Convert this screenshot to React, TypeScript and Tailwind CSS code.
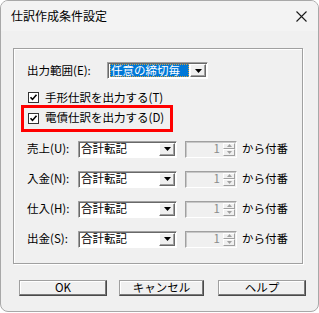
import React from "react";

const FONT = { fontFamily: '"Noto Sans CJK JP", "Noto Sans", sans-serif' };

function DropButton() {
  return (
    <div className="w-[16px] h-full flex items-center justify-center bg-[#f0f0f0] border border-t-white border-l-white border-b-[#696969] border-r-[#696969] shadow-[inset_-1px_-1px_0_#a0a0a0]">
      <svg width="7" height="4" viewBox="0 0 7 4">
        <path d="M0 0h7L3.5 4z" fill="#000" />
      </svg>
    </div>
  );
}

function Combo({ value, width, selected }: { value: string; width: number; selected?: boolean }) {
  return (
    <div
      className="h-[17px] flex items-stretch bg-white border border-t-[#a0a0a0] border-l-[#a0a0a0] border-b-white border-r-white shadow-[inset_1px_1px_0_#696969]"
      style={{ width }}
    >
      <div className="flex-1 flex items-center pl-[2px] pr-[1px] py-[1px] min-w-0">
        {selected ? (
          <div className="w-full h-full bg-[#0078d7] text-white flex items-center pl-[1px] outline-1 outline-dotted outline-[#d0a040] -outline-offset-1 leading-none">
            {value}
          </div>
        ) : (
          <span className="leading-none text-black">{value}</span>
        )}
      </div>
      <div className="py-[1px] pr-[1px]">
        <DropButton />
      </div>
    </div>
  );
}

function Spinner() {
  return (
    <div className="w-[52px] h-[17px] flex items-stretch bg-[#f0f0f0] border border-t-[#a0a0a0] border-l-[#a0a0a0] border-b-white border-r-white shadow-[inset_1px_1px_0_#c8c8c8]">
      <div className="flex-1 flex items-center justify-end pr-[3px] text-[#8a8a8a] leading-none">1</div>
      <div className="w-[13px] flex flex-col py-[1px] pr-[1px]">
        <div className="flex-1 flex items-center justify-center border border-t-white border-l-white border-b-[#a0a0a0] border-r-[#a0a0a0]">
          <svg width="5" height="3" viewBox="0 0 5 3">
            <path d="M0 3h5L2.5 0z" fill="#a0a0a0" />
          </svg>
        </div>
        <div className="flex-1 flex items-center justify-center border border-t-white border-l-white border-b-[#a0a0a0] border-r-[#a0a0a0]">
          <svg width="5" height="3" viewBox="0 0 5 3">
            <path d="M0 0h5L2.5 3z" fill="#a0a0a0" />
          </svg>
        </div>
      </div>
    </div>
  );
}

function Check({ label }: { label: string }) {
  return (
    <div className="flex items-center gap-[6px]">
      <div className="w-[11px] h-[11px] bg-white border border-[#333] flex items-center justify-center">
        <svg width="9" height="9" viewBox="0 0 9 9">
          <path d="M1.5 4.2l2 2.2 4-4.6" stroke="#000" strokeWidth="1.6" fill="none" />
        </svg>
      </div>
      <span className="leading-none">{label}</span>
    </div>
  );
}

function NumberRow({ label }: { label: string }) {
  return (
    <div className="flex items-center h-[17px]">
      <span className="w-[51px] leading-none">{label}</span>
      <Combo value="合計転記" width={99} />
      <div className="ml-[8px]">
        <Spinner />
      </div>
      <span className="ml-[5px] leading-none">から付番</span>
    </div>
  );
}

function Btn({ label, width }: { label: string; width: number }) {
  return (
    <button
      className="h-[16px] flex items-center justify-center bg-[#f0f0f0] border border-t-[#a0a0a0] border-l-[#a0a0a0] border-b-[#4a4a4a] border-r-[#4a4a4a] shadow-[inset_-1px_-1px_0_#7a7a7a,inset_1px_1px_0_#fff] text-[11.5px] leading-none text-black"
      style={{ width }}
    >
      {label}
    </button>
  );
}

export default function App() {
  return (
    <div className="w-[319px] h-[313px] bg-white" style={FONT}>
      <div className="w-[319px] h-[312px] rounded-[8px] border border-[#a8a8a8] bg-[#f0f0f0] overflow-hidden flex flex-col">
        {/* Title bar */}
        <div className="h-[30px] bg-[#f3f3f3] flex items-center justify-between pl-[10px] pr-[11px]">
          <span className="text-[12px] text-black leading-none">仕訳作成条件設定</span>
          <svg width="11" height="11" viewBox="0 0 11 11">
            <path d="M0.5 0.5l10 10M10.5 0.5l-10 10" stroke="#1a1a1a" strokeWidth="1.1" />
          </svg>
        </div>

        {/* Group box */}
        <div className="ml-[12px] mt-[17px] w-[290px] h-[216px] shrink-0 border border-[#a0a0a0] shadow-[inset_1px_1px_0_#fff,1px_1px_0_#fff] pl-[13px] pt-[13px] text-[11.5px] text-black">
          <div className="flex items-center h-[17px]">
            <span className="w-[80px] leading-none">出力範囲(E):</span>
            <Combo value="任意の締切毎" width={101} selected />
          </div>

          <div className="mt-[13px] ml-[1px]">
            <Check label="手形仕訳を出力する(T)" />
          </div>

          <div className="mt-[1px] -ml-[6px] w-[152px] h-[27px] border-[3px] border-[#ff0000] flex items-center pl-[4px]">
            <Check label="電債仕訳を出力する(D)" />
          </div>

          <div className="mt-[9px] flex flex-col gap-[13px]">
            <NumberRow label="売上(U):" />
            <NumberRow label="入金(N):" />
            <NumberRow label="仕入(H):" />
            <NumberRow label="出金(S):" />
          </div>
        </div>

        {/* Buttons */}
        <div className="mt-[16px] ml-[18px] flex items-center">
          <Btn label="OK" width={88} />
          <div className="ml-[12px]">
            <Btn label="キャンセル" width={85} />
          </div>
          <div className="ml-[14px]">
            <Btn label="ヘルプ" width={88} />
          </div>
        </div>
      </div>
    </div>
  );
}
